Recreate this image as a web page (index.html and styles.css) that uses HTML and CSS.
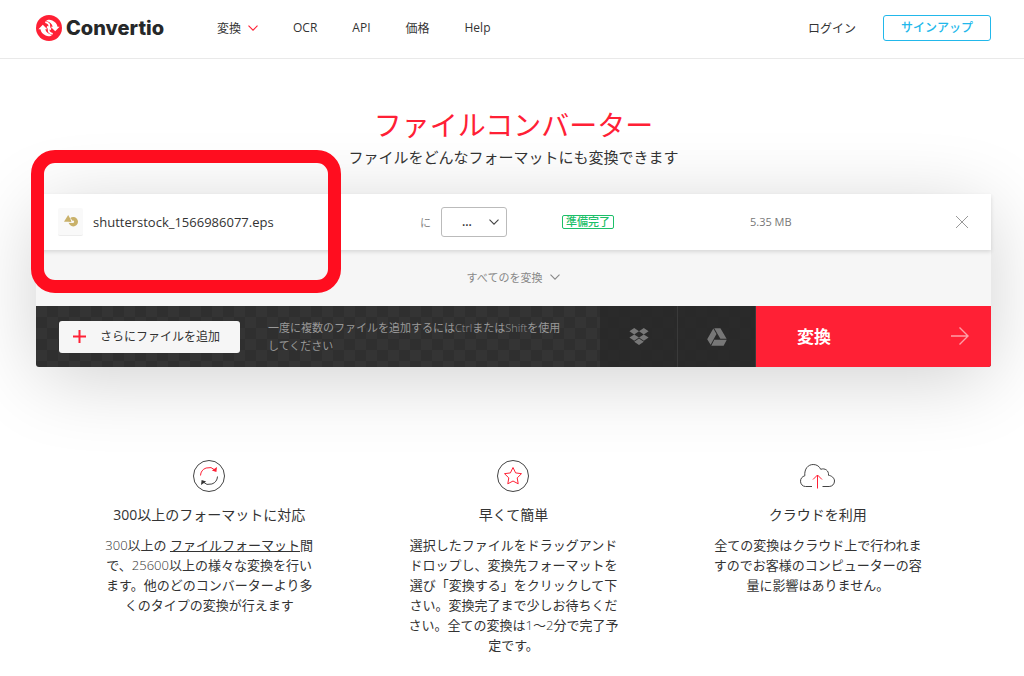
FILE: index.html
```html
<!DOCTYPE html>
<html lang="ja">
<head>
<meta charset="utf-8">
<meta name="viewport" content="width=device-width, initial-scale=1">
<title>ファイルコンバーター - Convertio</title>
<link rel="stylesheet" href="styles.css">
</head>
<body>
<header class="header">
  <a class="logo" href="#">
    <svg class="logo-mark" viewBox="0 0 26 26" aria-hidden="true">
      <circle cx="13" cy="13" r="13" fill="#ff2035"/>
      <path d="M2.400 14.300 6.800 9.800l4.500 4.500H9.300c.6 2.800 3 4.900 6.700 5.600-1.500 1.500-4 1.600-6.300.6-3-1.300-4.800-3.500-5.200-6.200z" fill="#fff"/>
      <path d="M23.600 11.700 19.200 16.200l-4.500-4.500h2c-.6-2.800-3-4.900-6.700-5.600 1.500-1.500 4-1.600 6.300-.6 3 1.300 4.800 3.500 5.200 6.200z" fill="#fff"/>
      <path d="M9.300 7.200c3.200.6 4.200 2.300 4 4.200-.1 1.700.5 2.400 1.600 3.200M16.700 18.800c-3.200-.6-4.200-2.300-4-4.200.1-1.700-.5-2.400-1.600-3.200" fill="none" stroke="#fff" stroke-width="1.800"/>
    </svg>
    <span>Convertio</span>
  </a>
  <nav class="nav">
    <button class="nav-item" type="button">変換
      <svg class="chevron chevron-red" viewBox="0 0 10 6" aria-hidden="true"><path d="M.5.7 5 5.200 9.500.7"/></svg>
    </button>
    <a class="nav-item" href="#">OCR</a>
    <a class="nav-item" href="#">API</a>
    <a class="nav-item" href="#">価格</a>
    <a class="nav-item" href="#">Help</a>
  </nav>
  <a class="login" href="#">ログイン</a>
  <a class="signup" href="#">サインアップ</a>
</header>

<main class="main">
  <div class="intro">
    <h1>ファイルコンバーター</h1>
    <p>ファイルをどんなフォーマットにも変換できます</p>
  </div>

  <section class="converter">
    <div class="file-row">
      <div class="file">
        <span class="file-icon">
          <svg viewBox="0 0 14 12" aria-hidden="true">
            <path d="M4.200 0 8 6.800H0z" fill="#c9b16a"/>
            <circle cx="9.300" cy="6.700" r="4.700" fill="#c9b16a"/>
            <path d="M4.200 7.400h4.200L6.600 3.500" fill="none" stroke="#f9f9f9"/>
            <circle cx="8.800" cy="6.700" r="1.300" fill="#f9f9f9"/>
          </svg>
        </span>
        <span class="file-name">shutterstock_1566986077.eps</span>
      </div>
      <div class="convert-to">
        <label for="format">に</label>
        <div class="select">
          <select id="format"><option>...</option></select>
          <svg class="chevron" viewBox="0 0 10 6" aria-hidden="true"><path d="M.5.7 5 5.200 9.500.7"/></svg>
        </div>
      </div>
      <div><span class="badge">準備完了</span></div>
      <div class="size">5.35 MB</div>
      <button class="close" type="button" aria-label="削除">
        <svg viewBox="0 0 14 14" aria-hidden="true"><path d="m1 1 12 12M13 1 1 13"/></svg>
      </button>
    </div>
    <div class="all-row">
      <button class="convert-all" type="button">すべてのを変換
        <svg class="chevron" viewBox="0 0 10 6" aria-hidden="true"><path d="M.5.7 5 5.200 9.500.7"/></svg>
      </button>
    </div>
    <div class="actions">
      <div class="add">
        <button class="add-button" type="button">
          <svg viewBox="0 0 13 13" aria-hidden="true"><path d="M6.500 0v13M0 6.500h13"/></svg>
          さらにファイルを追加
        </button>
        <p>一度に複数のファイルを追加するには<span class="light">Ctrl</span>または<span class="light">Shift</span>を使用してください</p>
      </div>
      <button class="source" type="button" aria-label="Dropbox">
        <svg viewBox="0 0 20 18" aria-hidden="true">
          <path d="M5.200 0 10 3.200 5.200 6.400.4 3.200zM14.800 0l4.800 3.200-4.800 3.200L10 3.200zM5.200 6.400 10 9.600l-4.800 3.200L.4 9.600zM14.800 6.400l4.800 3.200-4.800 3.200L10 9.600zM10 10.600l4.800 3.200L10 17l-4.800-3.200z"/>
        </svg>
      </button>
      <button class="source" type="button" aria-label="Google Drive">
        <svg viewBox="0 0 20 18" aria-hidden="true">
          <path d="M6.300.5 9.500 6 3.600 16.800.2 11.200zM7.200.2h6.200l6.200 10.600h-6.200zM7.300 11.800h12.500l-3.200 5.900H4.300z"/>
        </svg>
      </button>
      <button class="convert" type="button">変換
        <svg viewBox="0 0 18 18" aria-hidden="true"><path d="M0 9h17M8.500.5 17 9l-8.500 8.500"/></svg>
      </button>
    </div>
    <div class="highlight"></div>
  </section>

  <section class="features">
    <article>
      <svg class="feature-icon" viewBox="0 0 36 34" aria-hidden="true">
        <circle cx="18" cy="17" r="15.500"/>
        <g class="accent"><path d="M9.500 16.500a8.500 8.500 0 0 1 14.700-5.300"/><path class="fill" d="m26 8-.6 5-4.500-1.500z"/></g>
        <path d="M26.500 17.500a8.500 8.500 0 0 1-14.700 5.300"/><path class="fill" d="m10 26 .6-5 4.500 1.500z"/>
      </svg>
      <h2>300以上のフォーマットに対応</h2>
      <p><span class="light">300</span>以上の <a href="#">ファイルフォーマット</a>間で、<span class="light">25600</span>以上の様々な変換を行います。他のどのコンバーターより多くのタイプの変換が行えます</p>
    </article>
    <article>
      <svg class="feature-icon" viewBox="0 0 36 34" aria-hidden="true">
        <circle cx="18" cy="17" r="15.500"/>
        <path class="accent" d="m18 8.500 2.600 5.400 5.900.8-4.300 4.200 1 5.900-5.200-2.800-5.200 2.800 1-5.900-4.300-4.200 5.900-.8z"/>
      </svg>
      <h2>早くて簡単</h2>
      <p>選択したファイルをドラッグアンドドロップし、変換先フォーマットを選び「変換する」をクリックして下さい。変換完了まで少しお待ちください。全ての変換は<span class="light">1</span>〜<span class="light">2</span>分で完了予定です。</p>
    </article>
    <article>
      <svg class="feature-icon" viewBox="0 0 36 34" aria-hidden="true">
        <path d="M12 27.500H5.500C2.500 27.500.5 25 .5 22.200c0-2.700 1.800-4.800 4.300-5.400C4.200 9.700 8.200 5.500 13.200 5.500c3.700 0 6.300 2 7.500 4.800 4.300-1.500 8.300 1.300 7.800 6 3 .3 6 2.700 6 5.700 0 3.100-2.300 5.500-5.300 5.500H22.500"/>
        <path class="accent" d="M17.500 29.500V16M13 20.500l4.500-4.500 4.500 4.500"/>
      </svg>
      <h2>クラウドを利用</h2>
      <p>全ての変換はクラウド上で行われますのでお客様のコンピューターの容量に影響はありません。</p>
    </article>
  </section>
</main>
</body>
</html>
```
FILE: styles.css
```css
* {
  box-sizing: border-box;
}

body {
  margin: 0;
  background: #fff;
  color: #333;
  font-family: "Open Sans", "Noto Sans CJK JP", sans-serif;
  font-size: 13px;
}

h1,
h2,
p {
  margin: 0;
  font-weight: 400;
}

a {
  color: inherit;
  text-decoration: none;
}

button,
select {
  margin: 0;
  padding: 0;
  border: 0;
  background: none;
  color: inherit;
  font: inherit;
  cursor: pointer;
}

svg {
  flex: none;
}

.light {
  font-weight: 300;
}

.header {
  position: relative;
  z-index: 1;
  display: flex;
  align-items: center;
  height: 59px;
  padding: 0 33px 3px 36px;
  border-bottom: 1px solid #e9e9e9;
  background: #fff;
  font-size: 12px;
}

.logo {
  display: flex;
  flex: none;
  align-items: center;
  gap: 4px;
  width: 128px;
  color: #262829;
  font-family: Inter, sans-serif;
  font-size: 20px;
  font-weight: 800;
  line-height: 26px;
}

.logo-mark {
  width: 26px;
  height: 26px;
}

.nav {
  display: flex;
  flex: 1;
  gap: 35px;
  margin-left: 53px;
}

.nav-item {
  display: flex;
  align-items: center;
  gap: 7px;
}

.chevron {
  width: 10px;
  height: 6px;
  fill: none;
  stroke: currentColor;
  stroke-width: 1.1;
}

.chevron-red {
  color: #ff2035;
}

.signup {
  margin-left: 27px;
  padding: 0 17px;
  border: 1px solid #22b8eb;
  border-radius: 3px;
  color: #22b8eb;
  font-weight: 500;
  line-height: 24px;
}

.main {
  padding: 0 33px 0 36px;
}

.intro {
  padding: 46px 0 24px;
  text-align: center;
}

.intro h1 {
  color: #ff2035;
  font-size: 28px;
  line-height: 40px;
}

.intro p {
  position: relative;
  z-index: 1;
  font-size: 15px;
  line-height: 25px;
}

.converter {
  position: relative;
  border-radius: 3px;
  background: #f6f6f6;
  box-shadow: 0 12px 80px -4px rgba(0, 0, 0, 0.2);
}

.file-row {
  display: grid;
  grid-template-columns: 362fr 142fr 188fr 205fr 14px;
  align-items: center;
  height: 56px;
  padding: 0 22px 1px;
  background: #fff;
  box-shadow: 0 2px 4px rgba(0, 0, 0, 0.12);
}

.file,
.convert-to {
  display: flex;
  align-items: center;
  gap: 10px;
}

.file-icon {
  display: grid;
  place-items: center;
  width: 25px;
  height: 28px;
  border-bottom: 1px solid #ececec;
  border-radius: 2px;
  background: #f9f9f9;
}

.file-icon svg {
  width: 14px;
  height: 12px;
}

.convert-to {
  color: #888;
  font-size: 11px;
}

.select {
  display: grid;
  align-items: center;
  width: 66px;
}

.select > * {
  grid-area: 1 / 1;
}

.select select {
  height: 30px;
  padding-left: 20px;
  border: 1px solid #bbb;
  border-radius: 3px;
  appearance: none;
  color: #333;
  font-size: 12px;
  font-weight: 600;
}

.select .chevron {
  justify-self: end;
  margin-right: 8px;
  color: #444;
  pointer-events: none;
}

.badge {
  display: block;
  width: max-content;
  padding: 0 3px;
  border: 1px solid #1cbf68;
  border-radius: 2px;
  color: #1cbf68;
  font-size: 11px;
  font-weight: 500;
  line-height: 12px;
}

.size {
  color: #777;
  font-size: 11px;
}

.close {
  display: grid;
}

.close svg {
  width: 14px;
  height: 14px;
  stroke: #999;
}

.all-row {
  display: grid;
  place-items: center;
  height: 56px;
  padding-bottom: 3px;
}

.convert-all {
  display: flex;
  align-items: center;
  gap: 8px;
  color: #888;
  font-size: 11px;
}

.actions {
  display: flex;
  min-height: 61px;
  overflow: hidden;
  border-radius: 0 0 3px 3px;
  background: repeating-conic-gradient(#2f2f2f 0 25%, #343434 0 50%) 0 0 / 22px 22px;
}

.add {
  display: flex;
  flex: 1;
  align-items: center;
  gap: 28px;
  padding: 0 23px;
}

.add-button {
  display: flex;
  flex: none;
  align-items: center;
  gap: 14px;
  height: 32px;
  padding: 0 20px 1px 14px;
  border-radius: 3px;
  background: #f6f6f6;
  font-size: 12px;
}

.add-button svg {
  width: 13px;
  height: 13px;
  stroke: #ff2035;
  stroke-width: 2;
}

.add p {
  padding-right: 8px;
  color: #999;
  font-size: 11px;
  line-height: 18px;
}

.source {
  display: grid;
  place-items: center;
  width: 78px;
  border-right: 1px solid #3a3a3a;
  background: rgba(38, 38, 38, 0.7);
}

.source svg {
  width: 20px;
  height: 18px;
  fill: #777;
}

.convert {
  display: flex;
  align-items: center;
  justify-content: space-between;
  width: 235px;
  padding: 0 22px 2px 41px;
  background: #ff2035;
  color: #fff;
  font-size: 17px;
  font-weight: 600;
}

.convert svg {
  width: 18px;
  height: 18px;
  fill: none;
  stroke: #ff9fa8;
  stroke-width: 1.4;
}

.highlight {
  position: absolute;
  top: -44px;
  left: -5px;
  width: 310px;
  height: 143px;
  border: 13px solid #ff0d1f;
  border-radius: 24px;
  pointer-events: none;
}

.features {
  position: relative;
  display: grid;
  grid-template-columns: repeat(3, 1fr);
  margin-top: 92px;
  padding: 0 21px;
  text-align: center;
}

.features article {
  padding: 0 47px;
}

.features h2 {
  margin: 8px 0 10px;
  font-size: 14px;
  line-height: 20px;
}

.features p {
  line-height: 20px;
}

.features a {
  text-decoration: underline;
}

.feature-icon {
  width: 36px;
  height: 34px;
  fill: none;
  stroke: #444;
}

.accent {
  stroke: #ff2035;
}

.fill {
  fill: #333;
  stroke: none;
}

.accent .fill {
  fill: #ff2035;
}
```
